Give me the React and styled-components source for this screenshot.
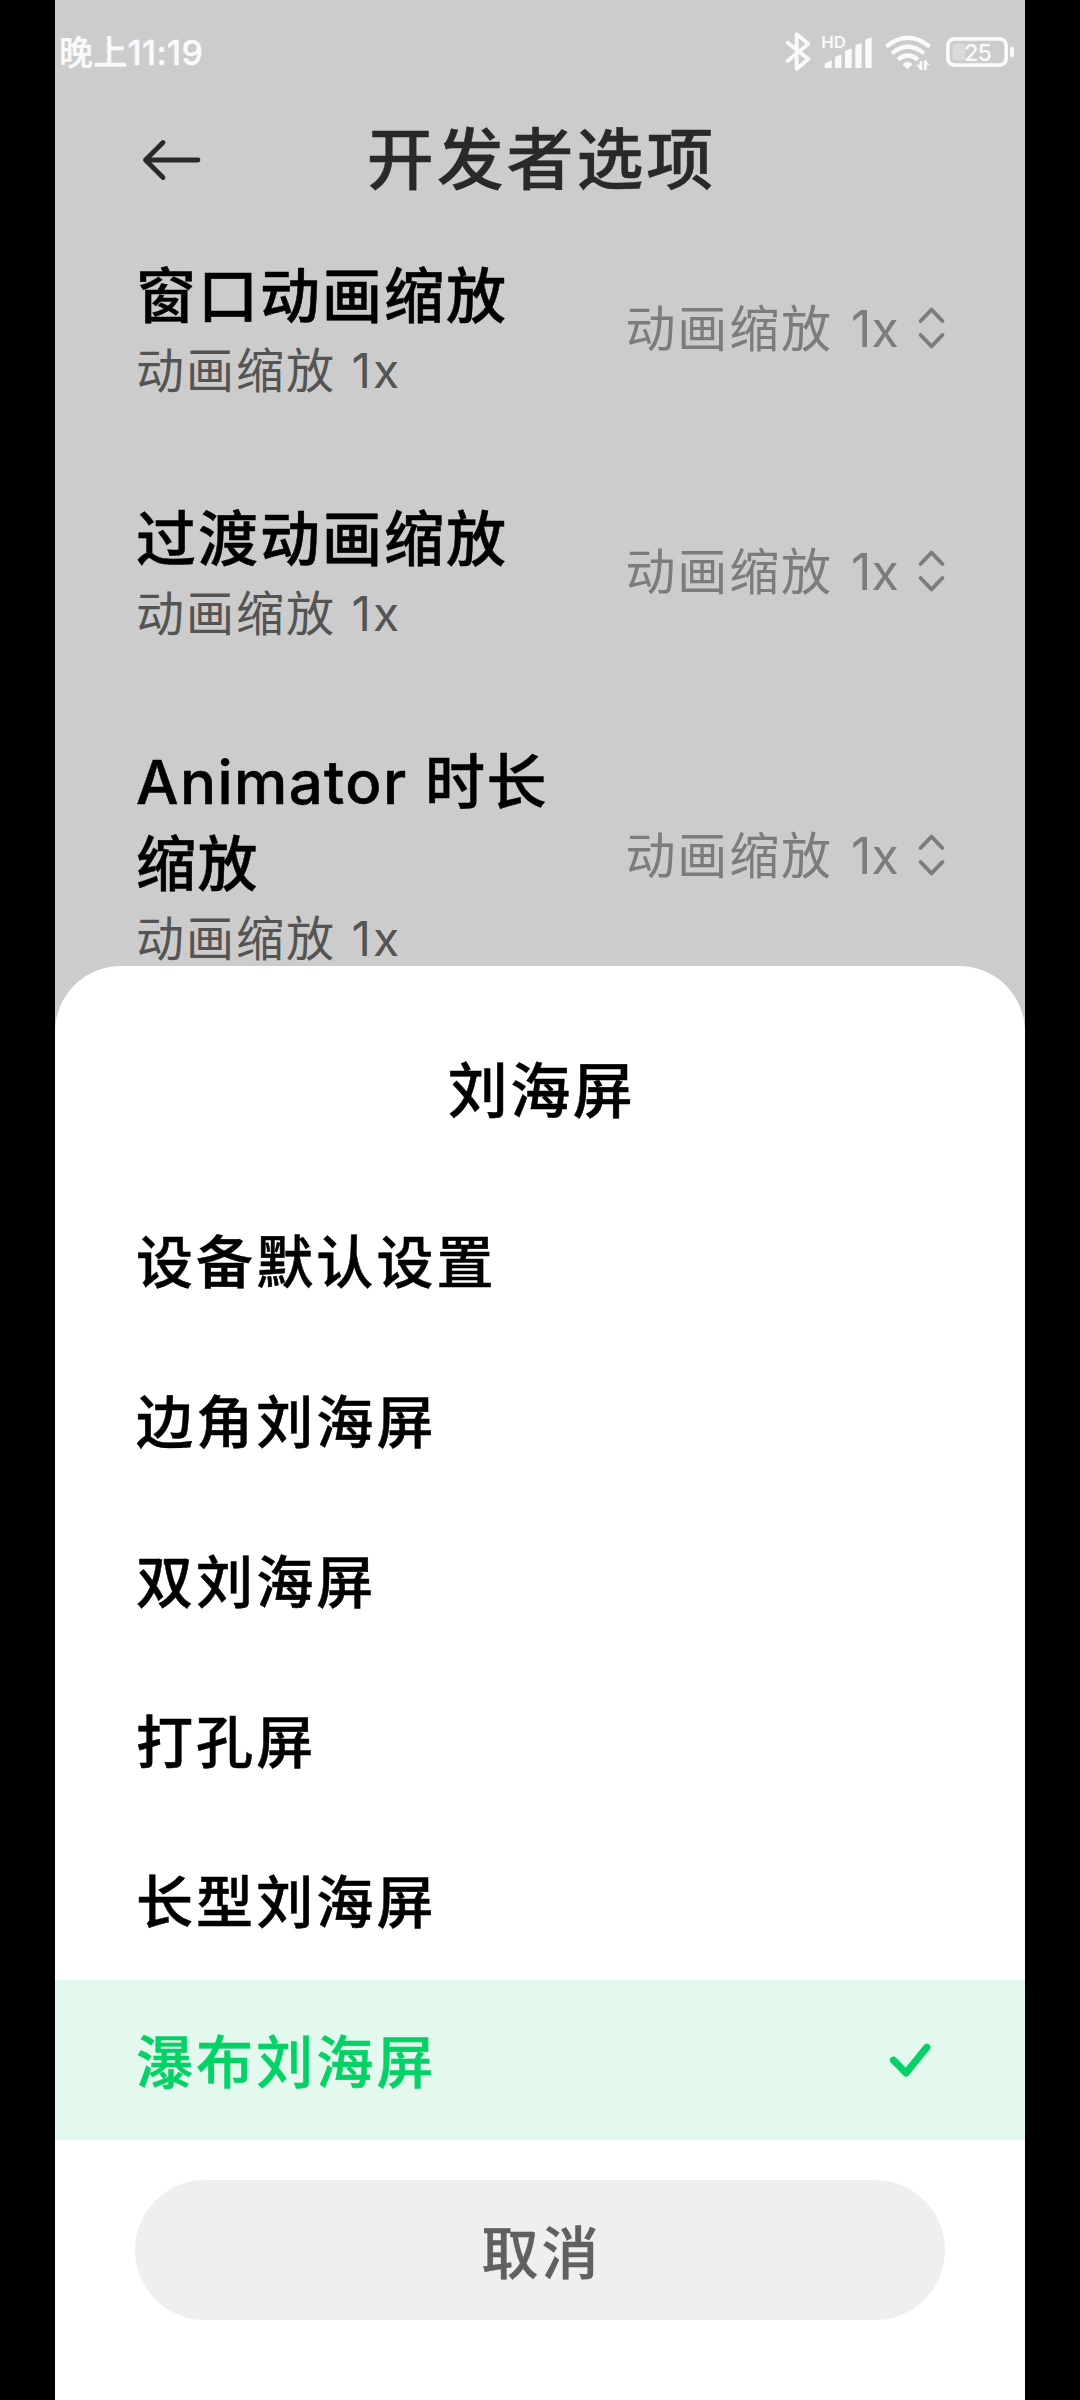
import React from 'react';
import styled, { createGlobalStyle } from 'styled-components';

const GlobalStyle = createGlobalStyle`
  * { box-sizing: border-box; }
  body {
    margin: 0;
    background: #000;
    font-family: Inter, "Noto Sans CJK SC", sans-serif;
  }
`;

const Screen = styled.div`
  position: relative;
  width: 970px;
  height: 2400px;
  margin: 0 55px;
  overflow: hidden;
  background: #ccc;
`;

const StatusBar = styled.div`
  display: flex;
  align-items: center;
  justify-content: space-between;
  height: 102px;
  padding: 0 10px 0 4px;
  color: #fafafa;
`;

const Clock = styled.span`
  padding-top: 3px;
  font-size: 34px;
  font-weight: 500;
  line-height: 40px;
  letter-spacing: 0.3px;
  -webkit-text-stroke: 0.4px currentColor;
  white-space: nowrap;
`;

const StatusIcons = styled.div`
  display: flex;
  align-items: center;
`;

const StatusIcon = styled.svg`
  display: block;
  height: 42px;
  width: ${(p) => p.$width}px;
  margin-left: ${(p) => p.$gap || 0}px;
  fill: none;
  stroke: #fafafa;
  stroke-linecap: round;
  stroke-linejoin: round;
  text {
    fill: #fafafa;
    stroke: none;
    font-family: Inter, sans-serif;
  }
`;

const Header = styled.header`
  display: grid;
  grid-template-columns: 120px 1fr 120px;
  align-items: center;
  height: 106px;
  padding: 11px 0 0;
`;

const BackArrow = styled.svg`
  width: 60px;
  height: 42px;
  margin: 0 0 2px 87px;
  display: block;
  fill: none;
  stroke: #292929;
  stroke-width: 4.8;
  stroke-linecap: round;
  stroke-linejoin: round;
`;

const PageTitle = styled.h1`
  margin: 0;
  padding: 0 0 2px 3px;
  text-align: center;
  font-size: 67px;
  font-weight: 500;
  line-height: 90px;
  letter-spacing: 2.9px;
  -webkit-text-stroke: 0.4px currentColor;
  color: #292929;
`;

const Preference = styled.div`
  display: flex;
  align-items: center;
  justify-content: space-between;
  padding: 46px 80px 47px 81px;
`;

const PreferenceText = styled.div`
  width: 430px;
`;

const PreferenceTitle = styled.div`
  padding-top: 1px;
  margin-bottom: -1px;
  font-size: 60px;
  font-weight: 500;
  line-height: 82px;
  letter-spacing: ${(p) => p.$spacing}px;
  -webkit-text-stroke: 0.5px currentColor;
  color: #000;
`;

const PreferenceSummary = styled.div`
  padding-top: 1px;
  margin-bottom: -1px;
  font-size: 48px;
  line-height: 68px;
  letter-spacing: 2px;
  color: #545454;
`;

const PreferenceValue = styled.div`
  display: flex;
  align-items: center;
  gap: 19px;
  font-size: 50px;
  line-height: 68px;
  letter-spacing: 1.9px;
  white-space: nowrap;
  color: #7c7c7c;
`;

const Multiplier = styled.span`
  margin-left: 2px;
  letter-spacing: 0.2px;
`;

const Chevrons = styled.svg`
  width: 27px;
  height: 42px;
  margin-bottom: 2px;
  display: block;
  fill: none;
  stroke: #7c7c7c;
  stroke-width: 3.8;
  stroke-linecap: round;
  stroke-linejoin: round;
`;

const Sheet = styled.section`
  position: absolute;
  left: 0;
  right: 0;
  bottom: 0;
  height: 1434px;
  display: flex;
  flex-direction: column;
  border-radius: 66px 66px 0 0;
  background: #fff;
`;

const SheetTitle = styled.h2`
  margin: 0;
  height: 214px;
  padding: 84px 0 0 3px;
  text-align: center;
  font-size: 60px;
  font-weight: 500;
  line-height: 82px;
  letter-spacing: 2.5px;
  -webkit-text-stroke: 0.5px currentColor;
`;

const Option = styled.div`
  display: flex;
  align-items: center;
  justify-content: space-between;
  height: 160px;
  padding: 0 94px 0 81px;
  font-size: 57px;
  font-weight: 500;
  letter-spacing: 3.1px;
  color: ${(p) => (p.$selected ? '#06d167' : '#000')};
  background: ${(p) => (p.$selected ? '#e3f9ed' : 'transparent')};
`;

const OptionLabel = styled.span`
  padding-bottom: 4px;
  -webkit-text-stroke: 0.5px currentColor;
`;

const CheckMark = styled.svg`
  width: 42px;
  height: 34px;
  display: block;
  fill: none;
  stroke: #06d167;
  stroke-width: 7.2;
  stroke-linecap: round;
  stroke-linejoin: round;
`;

const CancelButton = styled.button`
  display: block;
  width: 810px;
  height: 140px;
  margin: 40px auto 0;
  padding: 0 0 3px 3px;
  border: 0;
  border-radius: 70px;
  background: #efefef;
  color: #606060;
  font-family: inherit;
  font-size: 57px;
  font-weight: 500;
  letter-spacing: 3.1px;
  -webkit-text-stroke: 0.4px currentColor;
`;

const preferences = [
  { title: '窗口动画缩放', spacing: 2 },
  { title: '过渡动画缩放', spacing: 2 },
  { title: 'Animator 时长缩放', spacing: 1.4 },
];
const options = ['设备默认设置', '边角刘海屏', '双刘海屏', '打孔屏', '长型刘海屏', '瀑布刘海屏'];
const selectedOption = '瀑布刘海屏';

function Status() {
  return (
    <StatusBar>
      <Clock>晚上11:19</Clock>
      <StatusIcons>
        <StatusIcon $width={27} viewBox="75 60 81 126" strokeWidth="11.5">
          <path d="M83 98 L145 147 L110 177 V73 L145 101 L83 153" />
        </StatusIcon>
        <StatusIcon $width={52} $gap={9} viewBox="183 60 156 126">
          <text x="184" y="113" fontSize="46" fontWeight="600" textLength="74" lengthAdjust="spacingAndGlyphs">HD</text>
          <g fill="#fafafa" stroke="#fafafa" strokeWidth="4">
            <path d="M196 162 L213 153 V172 H196Z" />
            <path d="M227 142 L242 136 V172 H227Z" />
            <path d="M257 124 L273 118 V172 H257Z" />
            <path d="M288 107 L303 101 V172 H288Z" />
            <path d="M318 90 L333 84 V172 H318Z" />
          </g>
        </StatusIcon>
        <StatusIcon $width={48} $gap={11} viewBox="372 60 144 126" strokeWidth="13">
          <path strokeLinecap="butt" d="M379 110 Q443 56 509 110" />
          <path strokeLinecap="butt" d="M396 130 Q443 91 492 130" />
          <path strokeLinecap="butt" d="M414 149 Q443 124 474 149" />
          <path fill="#fafafa" strokeWidth="3" d="M430 163 Q443 150 456 163 L443 176Z" />
          <path strokeWidth="8" strokeLinecap="butt" d="M483 153 V180 M496 151 V180" />
          <path strokeWidth="2" fill="#fafafa" d="M471 166 L483 179 V166Z M496 152 L508 164 H496Z" />
        </StatusIcon>
        <StatusIcon $width={70} $gap={13} viewBox="555 60 210 126">
          <rect x="563.5" y="86.5" width="175" height="79" rx="20" strokeWidth="11" />
          <rect x="578" y="101" width="38" height="50" rx="8" fill="#dadada" stroke="none" />
          <rect x="750" y="110" width="12" height="32" rx="6" fill="#fafafa" stroke="none" />
          <text x="612" y="153" fontSize="70" fontWeight="500" textLength="84">25</text>
        </StatusIcon>
      </StatusIcons>
    </StatusBar>
  );
}

export default function App() {
  return (
    <>
      <GlobalStyle />
      <Screen>
        <Status />
        <Header>
          <BackArrow viewBox="0 0 60 42">
            <path d="M56 21 H3.5 M21 3.5 L3.5 21 L21 38.5" />
          </BackArrow>
          <PageTitle>开发者选项</PageTitle>
        </Header>
        {preferences.map(({ title, spacing }) => (
          <Preference key={title}>
            <PreferenceText>
              <PreferenceTitle $spacing={spacing}>{title}</PreferenceTitle>
              <PreferenceSummary>动画缩放 1x</PreferenceSummary>
            </PreferenceText>
            <PreferenceValue>
              <span>
                动画缩放 <Multiplier>1x</Multiplier>
              </span>
              <Chevrons viewBox="0 0 27 42">
                <path d="M2.6 14 L13.5 2.6 L24.4 14 M2.6 28 L13.5 39.4 L24.4 28" />
              </Chevrons>
            </PreferenceValue>
          </Preference>
        ))}
        <Sheet>
          <SheetTitle>刘海屏</SheetTitle>
          {options.map((label) => (
            <Option key={label} $selected={label === selectedOption}>
              <OptionLabel>{label}</OptionLabel>
              {label === selectedOption && (
                <CheckMark viewBox="0 0 42 34">
                  <path d="M4.5 17.2 L17 30 L37.8 4.3" />
                </CheckMark>
              )}
            </Option>
          ))}
          <CancelButton>取消</CancelButton>
        </Sheet>
      </Screen>
    </>
  );
}
